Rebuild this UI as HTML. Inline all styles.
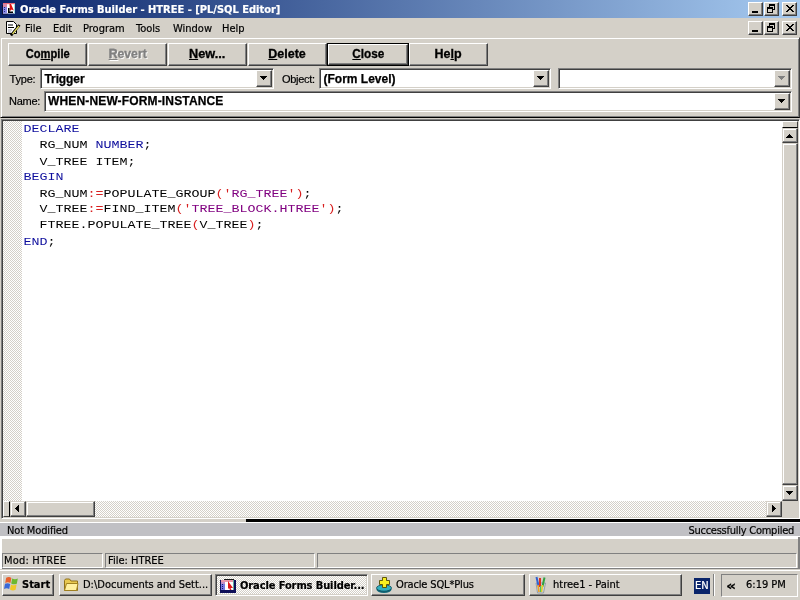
<!DOCTYPE html>
<html><head><meta charset="utf-8"><title>Oracle Forms Builder - HTREE - [PL/SQL Editor]</title>
<style>
*{box-sizing:border-box;margin:0;padding:0}
html,body{width:800px;height:600px;overflow:hidden;background:#d4d0c8}
body{position:relative;font-family:"DejaVu Sans Condensed","DejaVu Sans","Liberation Sans",sans-serif;font-size:11px;color:#000}
body div,body span,svg{position:absolute}
.t{white-space:nowrap;line-height:14px;-webkit-text-stroke:.2px}
.raised{background:#d4d0c8;border:1px solid;border-color:#fff #404040 #404040 #fff;box-shadow:inset -1px -1px 0 #808080}
.raised2{background:#d4d0c8;border:1px solid;border-color:#d4d0c8 #404040 #404040 #d4d0c8;box-shadow:inset -1px -1px 0 #808080,inset 1px 1px 0 #fff}
.sunken{background:#fff;border:1px solid;border-color:#808080 #fff #fff #808080;box-shadow:inset 1px 1px 0 #404040,inset -1px -1px 0 #d4d0c8}
.field{border:1px solid;border-color:#808080 #fff #fff #808080;background:#d4d0c8}
.dither{background-image:conic-gradient(#fff 25%,#d4d0c8 0 50%,#fff 0 75%,#d4d0c8 0);background-size:2px 2px}
.btn{-webkit-text-stroke:.3px;font-family:"Liberation Sans",sans-serif;font-weight:bold;font-size:12px;text-align:center;line-height:21px}
.btn b{position:static;display:inline-block;transform:scaleX(.93)}
.arial{font-family:"Liberation Sans",sans-serif}
.ab{font-family:"Liberation Sans",sans-serif;font-weight:bold;font-size:12px;-webkit-text-stroke:.25px}
.code{font-family:"Liberation Mono",monospace;font-size:13.33px;line-height:18.4px;white-space:pre;left:23.5px;transform:scaleY(.87);transform-origin:0 0}
.code span{position:static}
.k{color:#0c0c9c}.s{color:#800080}.r{color:#d82020}
#w{left:0;top:0;width:800px;height:600px;will-change:transform}
</style></head><body><div id="w">
<!-- title bar -->
<div style="left:0;top:0;width:800px;height:18px;background:linear-gradient(90deg,#0a246a,#a6caf0)"></div>
<svg style="left:2px;top:3px" width="14" height="12" viewBox="0 0 14 12"><rect x="0" y="2" width="1" height="9.500" fill="#101030"/><rect x="0" y="10.500" width="6" height="1" fill="#101030"/><rect x="1" y="0" width="12" height="10.500" fill="#fff"/><rect x="1" y="0" width="12" height="1.200" fill="#e86878"/><rect x="1" y="1" width="4" height="3" fill="#d888a8"/><rect x="1" y="4" width="4" height="6.500" fill="#8c8ce8"/><path d="M2 4h1v1h-1zM2 6h1v1h-1zM2 8h1v1h-1z" fill="#282880"/><path d="M6 5h1.600v3.500h3.400v1.600h-5z" fill="#000"/><path d="M7.500 1h1.500l2.800 6.500-2.300-1-1.500 1.500z" fill="#e01010"/><rect x="12" y="1" width="1" height="9.500" fill="#a0e0e0"/></svg>
<span class="t" style="left:20px;top:3px;color:#fff;font-weight:bold;font-size:11px">Oracle Forms Builder - HTREE - [PL/SQL Editor]</span>
<!-- title buttons -->
<div class="raised" style="left:748px;top:2px;width:15px;height:14px"></div>
<div class="raised" style="left:764px;top:2px;width:15px;height:14px"></div>
<div class="raised" style="left:782px;top:2px;width:15px;height:14px"></div>
<div class="raised" style="left:748px;top:21px;width:15px;height:14px"></div>
<div class="raised" style="left:764px;top:21px;width:15px;height:14px"></div>
<div class="raised" style="left:782px;top:21px;width:15px;height:14px"></div>
<svg style="left:748px;top:2px" width="50" height="34" viewBox="0 0 50 34" shape-rendering="crispEdges">
<g id="g1"><rect x="4" y="9" width="6" height="2" fill="#000"/>
<path d="M21 2h6v2h-6zM27 2v6h-1v-6zM21 4h1v1h-1zM25 7h2v1h-2zM19 5h6v2h-6zM19 7h1v4h-1zM24 7h1v4h-1zM19 10h6v1h-6z" fill="#000"/>
<path d="M38 3h2v1h-2zM44 3h2v1h-2zM39 4h2v1h-2zM43 4h2v1h-2zM40 5h4v1h-4zM41 6h2v1h-2zM40 7h4v1h-4zM39 8h2v1h-2zM43 8h2v1h-2zM38 9h2v1h-2zM44 9h2v1h-2z" fill="#000"/></g>
<use href="#g1" y="19"/>
</svg>
<!-- menu -->
<svg style="left:5px;top:20px" width="17" height="17" viewBox="0 0 17 17"><path d="M1.500 1.500h7l3 3v9h-10z" fill="#fff" stroke="#000"/><path d="M3 5h5M3 7.500h6" stroke="#000"/><path d="M3 10h4M3 12h3" stroke="#99a"/><path d="M14.500 5l-7 8.500-1.500 2" stroke="#000" stroke-width="2.600"/><path d="M14 6l-6.500 8" stroke="#e8e060" stroke-width="1.200"/></svg>
<span class="t" style="left:25px;top:22px">File</span>
<span class="t" style="left:53px;top:22px">Edit</span>
<span class="t" style="left:83px;top:22px">Program</span>
<span class="t" style="left:136px;top:22px">Tools</span>
<span class="t" style="left:173px;top:22px">Window</span>
<span class="t" style="left:222px;top:22px">Help</span>
<!-- toolbar panel (raised) -->
<div style="left:0;top:37px;width:800px;height:81px;border:1px solid;border-color:#d4d0c8 #404040 #000 #d4d0c8;box-shadow:inset 1px 1px 0 #fff,inset -1px -1px 0 #808080"></div>
<!-- toolbar buttons -->
<div class="raised btn" style="left:8px;top:43px;width:79px;height:23px"><b>Co<u>m</u>pile</b></div>
<div class="raised btn" style="left:88px;top:43px;width:79px;height:23px;color:#808080;text-shadow:1px 1px 0 #fff"><b style="transform:scaleX(1.02)"><u>R</u>evert</b></div>
<div class="raised btn" style="left:168px;top:43px;width:79px;height:23px"><b style="transform:scaleX(1.06)"><u>N</u>ew...</b></div>
<div class="raised btn" style="left:248px;top:43px;width:79px;height:23px"><b style="transform:scaleX(1.04)"><u>D</u>elete</b></div>
<div style="left:327px;top:43px;width:82px;height:23px;border:1px solid #000"></div>
<div class="raised btn" style="left:328px;top:44px;width:80px;height:21px;line-height:19px"><b style="transform:scaleX(.98)"><u>C</u>lose</b></div>
<div class="raised btn" style="left:409px;top:43px;width:79px;height:23px"><b style="transform:scaleX(1.04)">He<u>l</u>p</b></div>
<!-- type row -->
<span class="t arial" style="left:9.500px;top:72px;letter-spacing:-.2px">Type:</span>
<div class="sunken" style="left:40px;top:68px;width:234px;height:21px"></div>
<span class="t ab" style="left:44.500px;top:72px;letter-spacing:-.1px">Trigger</span>
<div class="raised" style="left:256px;top:70px;width:16px;height:17px"></div>
<span class="t arial" style="left:282px;top:72px;letter-spacing:-.3px">Object:</span>
<div class="sunken" style="left:319px;top:68px;width:232px;height:21px"></div>
<span class="t ab" style="left:323.500px;top:72px">(Form Level)</span>
<div class="raised" style="left:533px;top:70px;width:16px;height:17px"></div>
<div class="sunken" style="left:558px;top:68px;width:234px;height:21px"></div>
<div class="raised" style="left:774px;top:70px;width:16px;height:17px"></div>
<!-- name row -->
<span class="t arial" style="left:9px;top:94px;letter-spacing:-.25px">Name:</span>
<div class="sunken" style="left:44px;top:91px;width:748px;height:21px"></div>
<span class="t ab" style="left:48px;top:94px;letter-spacing:.15px">WHEN-NEW-FORM-INSTANCE</span>
<div class="raised" style="left:774px;top:93px;width:16px;height:17px"></div>
<svg style="left:0;top:0" width="800" height="120" viewBox="0 0 800 120" shape-rendering="crispEdges">
<path d="M260 76h7l-3.500 4z" fill="#000"/><path d="M537 76h7l-3.500 4z" fill="#000"/><path d="M778 76h7l-3.500 4z" fill="#808080"/><path d="M778 99h7l-3.500 4z" fill="#000"/>
</svg>
<!-- editor (sunken) -->
<div style="left:1px;top:119px;width:799px;height:400px;background:#fff;border:1px solid;border-color:#808080 #fff #fff #808080;box-shadow:inset 1px 1px 0 #404040,inset -1px -1px 0 #d4d0c8"></div>
<div class="dither" style="left:3px;top:121px;width:19px;height:380px"></div>
<div class="code" style="top:122px"><span class="k">DECLARE</span>
  RG_NUM <span class="k">NUMBER</span>;
  V_TREE ITEM;
<span class="k">BEGIN</span>
  RG_NUM<span class="r">:=</span>POPULATE_GROUP<span class="r">('</span><span class="s">RG_TREE</span><span class="r">')</span>;
  V_TREE<span class="r">:=</span>FIND_ITEM<span class="r">('</span><span class="s">TREE_BLOCK.HTREE</span><span class="r">')</span>;
  FTREE.POPULATE_TREE<span class="r">(</span>V_TREE<span class="r">)</span>;
<span class="k">END</span>;</div>
<!-- v scrollbar -->
<div style="left:782px;top:121px;width:16px;height:396px;background:#d4d0c8"></div>
<div style="left:782px;top:121px;width:16px;height:7px;background:#d4d0c8;border:1px solid;border-color:#fff #404040 #000 #fff"></div>
<div class="raised2" style="left:782px;top:128px;width:16px;height:15px"></div>
<div class="raised2" style="left:782px;top:143px;width:16px;height:342px"></div>
<div class="raised2" style="left:782px;top:485px;width:16px;height:16px"></div>
<!-- h scrollbar -->
<div class="dither" style="left:3px;top:501px;width:779px;height:16px"></div>
<div style="left:3px;top:501px;width:7px;height:16px;background:#d4d0c8;border:1px solid;border-color:#fff #000 #404040 #fff"></div>
<div class="raised2" style="left:10px;top:501px;width:16px;height:16px"></div>
<div class="raised2" style="left:26px;top:501px;width:69px;height:16px"></div>
<div class="raised2" style="left:766px;top:501px;width:16px;height:16px"></div>
<svg style="left:0;top:120px" width="800" height="400" viewBox="0 0 800 400" shape-rendering="crispEdges">
<path d="M786 18h7l-3.500-4z" fill="#000"/><path d="M786 371h7l-3.500 4z" fill="#000"/>
<path d="M19 385v7l-4-3.500z" fill="#000"/><path d="M772 385v7l4-3.500z" fill="#000"/>
</svg>
<!-- bottom lines -->
<div style="left:246px;top:519px;width:554px;height:3px;background:#000"></div>
<div style="left:0;top:522px;width:800px;height:1px;background:#fff"></div>
<div style="left:0;top:523px;width:800px;height:13px;background:#c0c0c4"></div>
<div style="left:0;top:536px;width:800px;height:3px;background:#fff"></div>
<div style="left:0;top:539px;width:2px;height:30px;background:#fff"></div>
<div style="left:798px;top:537px;width:2px;height:32px;background:#808080"></div>
<div style="left:2px;top:568px;width:798px;height:1px;background:#808080"></div>
<span class="t" style="left:7px;top:524px;letter-spacing:-.15px">Not Modified</span>
<span class="t" style="right:6px;top:524px;letter-spacing:-.25px">Successfully Compiled</span>
<!-- status bar -->
<div class="field" style="left:2px;top:553px;width:101px;height:15px"></div>
<div class="field" style="left:105px;top:553px;width:210px;height:15px"></div>
<div class="field" style="left:317px;top:553px;width:480px;height:15px"></div>
<span class="t" style="left:4px;top:554px;letter-spacing:.2px">Mod: HTREE</span>
<span class="t" style="left:108px;top:554px">File: HTREE</span>
<!-- taskbar -->
<div style="left:0;top:570px;width:800px;height:1px;background:#fff"></div>
<div class="raised" style="left:2px;top:574px;width:52px;height:22px"></div>
<span class="t" style="left:22px;top:578px;font-weight:bold">Start</span>
<div class="raised" style="left:59px;top:574px;width:153px;height:22px"></div>
<span class="t" style="left:83px;top:578px">D:\Documents and Sett...</span>
<div class="sunken dither" style="left:215px;top:574px;width:153px;height:22px"></div>
<span class="t" style="left:240px;top:579px;font-weight:bold;letter-spacing:-.1px">Oracle Forms Builder...</span>
<div class="raised" style="left:371px;top:574px;width:154px;height:22px"></div>
<span class="t" style="left:396px;top:578px;letter-spacing:-.15px">Oracle SQL*Plus</span>
<div class="raised" style="left:529px;top:574px;width:153px;height:22px"></div>
<span class="t" style="left:553px;top:578px">htree1 - Paint</span>
<div style="left:694px;top:578px;width:16px;height:16px;background:#0a246a"></div>
<span class="t" style="left:695px;top:579px;color:#fff">EN</span>
<div style="left:713px;top:574px;width:2px;height:22px;border-left:1px solid #808080;border-right:1px solid #fff"></div>
<div class="field" style="left:721px;top:574px;width:77px;height:23px"></div>
<span class="t" style="left:726px;top:579px;font-weight:bold;font-size:13px;transform:scaleX(1.35);transform-origin:0 0">«</span>
<span class="t" style="left:746px;top:578px">6:19 PM</span>
<!-- taskbar icons -->
<svg style="left:4px;top:576px" width="16" height="16" viewBox="0 0 16 16"><path d="M2.200 1.800q3-1.500 5.200.200l-1 5q-2.400-1.600-5.200-.100z" fill="#e8602c"/><path d="M8.200 2.400q2.600 1.600 5.600.100l-1 5.200q-3 1.400-5.600-.200z" fill="#6cb830"/><path d="M1 7.800q2.800-1.400 5.200.200l-1 5q-2.400-1.600-5.200-.100z" fill="#3868d8"/><path d="M7 8.400q2.600 1.600 5.600.200l-1 5.200q-3 1.300-5.600-.300z" fill="#f0c828"/></svg>
<svg style="left:63px;top:578px" width="16" height="14" viewBox="0 0 16 14"><path d="M1.500 12.500v-10l1-1.500h4l1.500 2h6.500v9.500z" fill="#e8c850" stroke="#907018"/><path d="M1.500 12.500l2-7h11.500l-1.500 7z" fill="#fff0a0" stroke="#a08020"/></svg>
<svg style="left:220px;top:579px" width="17" height="15" viewBox="0 0 17 15" shape-rendering="crispEdges"><rect x="0" y="1" width="16" height="13" fill="#101058"/><rect x="4" y="0" width="10" height="1" fill="#181818"/><rect x="1" y="1" width="13" height="10" fill="#fff"/><rect x="1" y="1" width="13" height="2" fill="#e898a8"/><rect x="1" y="3" width="4" height="2" fill="#c090c8"/><rect x="1" y="5" width="4" height="6" fill="#7878e0"/><path d="M2 5h1v1h-1zM2 7h1v1h-1zM2 9h1v1h-1z" fill="#181870"/><path d="M8 2l5 7h-2.500l1 2h-1.500l-1-2-1 1z" fill="#e01818" shape-rendering="auto"/><rect x="13" y="1" width="1" height="10" fill="#60a8a0"/></svg>
<svg style="left:376px;top:577px" width="17" height="17" viewBox="0 0 17 17"><ellipse cx="8" cy="12.500" rx="7.500" ry="3.500" fill="#106878"/><ellipse cx="8" cy="11" rx="7.500" ry="3.200" fill="#30b0c0" stroke="#0c4858" stroke-width=".8"/><path d="M6.500 .5h4v3h3v4h-3v3h-4v-3h-3v-4h3z" fill="#f8f020" stroke="#504800" stroke-width=".9"/></svg>
<svg style="left:534px;top:576px" width="14" height="18" viewBox="0 0 14 18"><path d="M2 7l1.500 10h6l2-10z" fill="#d0d4d8" stroke="#8890a0" stroke-width=".8"/><path d="M2.500 1l2 9" stroke="#3060d0" stroke-width="2"/><path d="M6 2v9" stroke="#e03020" stroke-width="2"/><path d="M10.500 1.500l-2 9" stroke="#30a040" stroke-width="2"/><path d="M4 9l1 7" stroke="#f0a020" stroke-width="1.600"/><path d="M8.500 9l-1 7" stroke="#e8d020" stroke-width="1.600"/><path d="M6.500 10v6" stroke="#50c060" stroke-width="1.200"/></svg>
</div></body></html>
